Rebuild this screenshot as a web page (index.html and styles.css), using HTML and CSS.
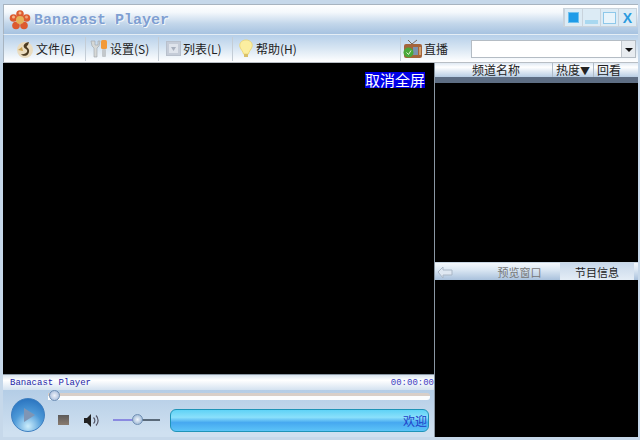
FILE: index.html
```html
<!DOCTYPE html>
<html lang="zh">
<head>
<meta charset="utf-8">
<title>Banacast Player</title>
<link rel="stylesheet" href="styles.css">
</head>
<body>
<div class="window">
  <header class="titlebar">
    <svg class="logo" width="22" height="22" viewBox="0 0 22 22">
      <g fill="#dd5a2e">
        <circle cx="11" cy="5" r="3.800"/><circle cx="4.500" cy="9" r="3.800"/><circle cx="17.500" cy="9" r="3.800"/><circle cx="7" cy="16.500" r="3.800"/><circle cx="15" cy="16.500" r="3.800"/>
      </g>
      <circle cx="11" cy="11" r="4" fill="#e4b25a"/>
      <circle cx="4.500" cy="8" r="1.500" fill="#f6b48a"/><circle cx="11" cy="4" r="1.500" fill="#f6b48a"/><circle cx="17.500" cy="8" r="1.500" fill="#eea27a"/>
    </svg>
    <span class="apptitle">Banacast Player</span>
    <div class="winbtns">
      <span class="wb wb-skin"><i></i></span>
      <span class="wb wb-min"><i></i></span>
      <span class="wb wb-max"><i></i></span>
      <span class="wb wb-close">X</span>
    </div>
  </header>
  <nav class="toolbar">
    <div class="tool tool-file">
      <svg width="20" height="20" viewBox="0 0 20 20"><circle cx="10" cy="11" r="8" fill="#eadcc0"/><path d="M14 3 C8 4 7 8 11 10 C14 12 11 16 6 15 C9 19 15 16 14 11 C13 8 10 8 13 6 Z" fill="#4d3c22"/><path d="M3 11 l4 -3 1 4 z" fill="#c9a24f"/></svg>
      <span>文件(E)</span>
    </div>
    <div class="tool tool-set">
      <svg width="22" height="22" viewBox="0 0 22 22"><path d="M3 3 l1 5 2 2 v9 h3 v-9 l2 -2 1 -5 -2 0 v4 h-3 v-4 z" fill="#d6d8d6" stroke="#9aa3a8" stroke-width=".6"/><rect x="13" y="2" width="6" height="9" rx="1.500" fill="#f29a3a"/><rect x="14" y="11" width="4" height="8" rx="1" fill="#c3c8cc"/></svg>
      <span>设置(S)</span>
    </div>
    <div class="tool tool-list">
      <svg width="15" height="15" viewBox="0 0 15 15"><rect x=".5" y=".5" width="14" height="14" fill="#c5ccd8" stroke="#b8c0cc"/><rect x="3" y="3" width="9" height="9" fill="#dfe4ec"/><path d="M5 6 h5 l-2.500 4 z" fill="#a8b0be"/></svg>
      <span>列表(L)</span>
    </div>
    <div class="tool tool-help">
      <svg width="16" height="20" viewBox="0 0 16 20"><path d="M8 1 C3 1 1 5 2 8 C3 11 5 12 5.500 15 L10.500 15 C11 12 13 11 14 8 C15 5 13 1 8 1Z" fill="#fbeea0" stroke="#ecd36a" stroke-width=".8"/><rect x="6" y="15" width="4" height="3" fill="#d9c06a"/></svg>
      <span>帮助(H)</span>
    </div>
    <div class="tool tool-live">
      <svg width="20" height="20" viewBox="0 0 20 20"><path d="M5 1 l4 4 5 -4" fill="none" stroke="#7a6a5a"/><rect x="1" y="5" width="18" height="14" rx="2" fill="#a4643a"/><rect x="10" y="8" width="5" height="8" fill="#7a93ae"/><rect x="16" y="8" width="2" height="8" fill="#d0a070"/><circle cx="5.500" cy="13.500" r="5" fill="#4aa83a"/><path d="M3.500 13.500 l2 2 2.500 -4" fill="none" stroke="#dff5d0"/></svg>
      <span>直播</span>
    </div>
    <div class="combo"><span class="combo-arrow"></span></div>
  </nav>
  <main class="content">
    <section class="left">
      <div class="video"><span class="fullscreen">取消全屏</span></div>
      <div class="player">
        <div class="infobar"><span>Banacast Player</span><span class="time">00:00:00</span></div>
        <div class="controls">
          <span class="play"><i></i></span>
          <div class="ctrlcol">
            <div class="seek"><span class="seekknob"></span></div>
            <div class="ctrlrow">
              <span class="stop"></span>
              <svg class="speaker" width="19" height="15" viewBox="0 0 19 15"><path d="M1 5 h3 l4 -4 v13 l-4 -4 h-3 z" fill="#222"/><path d="M10.500 4.500 a4 4 0 0 1 0 6 M13 2.500 a7 7 0 0 1 0 10" fill="none" stroke="#556" stroke-width="1.200"/></svg>
              <div class="volume"><span class="volknob"></span></div>
              <div class="marquee">欢迎</div>
            </div>
          </div>
        </div>
      </div>
    </section>
    <section class="right">
      <div class="listhead">
        <div class="cols"><span class="c-name">频道名称</span><span class="c-hot">热度<small class="sort">▼</small></span><span class="c-back">回看</span></div>
        <div class="headline"></div>
      </div>
      <div class="list"></div>
      <div class="tabs">
        <svg class="back" width="16" height="12" viewBox="0 0 16 12"><path d="M1 6 l5 -5 v3 h9 v5 h-9 v3 z" fill="#dfe8f2" stroke="#aab7c6"/></svg>
        <span class="tab tab-off">预览窗口</span>
        <span class="tab tab-on">节目信息</span>
      </div>
      <div class="preview"></div>
    </section>
  </main>
</div>
</body>
</html>
```
FILE: styles.css
```css
* { box-sizing: border-box; }
html, body { margin: 0; width: 640px; height: 440px; overflow: hidden; background: #c6d8ea; }
.window {
  width: 640px; height: 440px; display: flex; flex-direction: column;
  padding: 4px 2px 3px 3px; font: 12px "Noto Sans CJK SC", "Liberation Sans", sans-serif; color: #222;
}
.titlebar {
  height: 31px; flex: none; display: flex; align-items: center; padding-left: 5px;
  border-top: 1px solid #a8b4c0; border-bottom: 1px solid #e4edf5; border-left: 1px solid #a8b4c0;
  background: linear-gradient(#fff 0, #f4f8fc 25%, #c2d6ea 65%, #a6c2e0 100%);
}
.logo { margin-right: 3px; }
.apptitle {
  font: bold 15px "Liberation Mono", monospace; color: #7f9fd2; margin-top: 1px;
  text-shadow: 1px 1px 0 #f2f6fa, -1px 0 0 #e4edf5;
}
.winbtns { margin-left: auto; margin-right: 1px; margin-top: -4px; display: flex; gap: 1px; padding: 1px 1px 1px 2px; background: #c9d3dc; }
.wb { width: 17px; height: 17px; background: #dcebf5; display: flex; align-items: center; justify-content: center; }
.wb-skin i { width: 11px; height: 11px; background: #1e9be8; border: 1px solid #6fc0ee; display: block; }
.wb-min i { width: 13px; height: 4px; background: #a8d8f0; margin-top: 9px; display: block; }
.wb-max i { width: 13px; height: 12px; border: 1px solid #8ec8ea; background: #e8f4fb; display: block; }
.wb-close { color: #2a9be0; font: bold 14px "Liberation Sans", sans-serif; }
.toolbar {
  height: 28px; flex: none; display: flex; align-items: center;
  background: linear-gradient(#b6cfe9 0, #d8e6f3 50%, #fff 100%);
  border-bottom: 1px solid #b8bec4; border-left: 1px solid #a8b4c0;
}
.tool { display: flex; align-items: center; gap: 1px; white-space: nowrap; height: 24px; color: #222; }
.tool-file { width: 81px; padding-left: 11px; }
.tool-set { width: 73px; padding-left: 2px; border-left: 1px solid #c4cdd6; gap: 0; }
.tool-list { width: 74px; padding-left: 7px; border-left: 1px solid #c4cdd6; gap: 2px; }
.tool-help { width: 168px; padding-left: 5px; border-left: 1px solid #c4cdd6; gap: 2px; }
.tool-live { width: 71px; padding-left: 2px; border-left: 1px solid #c4cdd6; }
.combo {
  width: 165px; height: 18px; background: #fff; border: 1px solid #b4bcc4;
  display: flex; justify-content: flex-end;
}
.combo-arrow {
  width: 14px; border-left: 1px solid #c0c6cc; background: #e8ecf0; position: relative;
}
.combo-arrow::after {
  content: ""; position: absolute; left: 3px; top: 7px;
  border: 4px solid transparent; border-top: 4px solid #111; border-bottom: 0;
}
.content { flex: 1; display: flex; min-height: 0; }
.left { width: 432px; flex: none; display: flex; flex-direction: column; border-right: 1px solid #8a97a3; }
.video { height: 311px; flex: none; background: #000; display: flex; justify-content: flex-end; align-items: flex-start; padding: 9px 9px 0 0; }
.fullscreen { background: #0000e6; color: #fff; font-size: 15px; line-height: 16px; }
.player { flex: 1; display: flex; flex-direction: column; border-top: 1px solid #8a97a3; background: #bcd3e9; }
.infobar {
  height: 15px; flex: none; display: flex; justify-content: space-between; align-items: center; padding: 0 0 0 7px;
  font: 9px "Liberation Mono", monospace; color: #1e1ea8;
  background: linear-gradient(#d8e4ef, #fff 35%, #d4e2f0 100%);
}
.time { color: #3a3ac0; }
.controls { flex: 1; display: flex; padding-left: 8px; background: linear-gradient(#b4cde6, #cfe0f0 90%); }
.play {
  width: 34px; height: 34px; margin-top: 8px; border-radius: 50%; flex: none;
  background: radial-gradient(circle at 50% 85%, #cdeefc 0, #4e9ad8 45%, #1f68b8 100%);
  border: 1px solid #3e7fc0; display: flex; align-items: center; justify-content: center;
}
.play i { border-left: 11px solid #7f95b4; border-top: 7px solid transparent; border-bottom: 7px solid transparent; margin-left: 2px; }
.ctrlcol { flex: 1; display: flex; flex-direction: column; min-width: 0; }
.seek {
  height: 7px; margin: 3px 4px 0 3px; background: linear-gradient(#d8cfc8 0, #d8cfc8 50%, #fbfdfe 50%); position: relative; border-radius: 0 3px 3px 0;
}
.seekknob {
  position: absolute; left: 1px; top: -3px; width: 11px; height: 11px; border-radius: 50%;
  background: radial-gradient(circle, #eef2fa, #9db3d6); border: 1px solid #6f8fb5;
}
.ctrlrow { flex: 1; display: flex; align-items: center; padding-top: 3px; }
.stop { width: 11px; height: 10px; margin-left: 13px; background: linear-gradient(#5c5a5a, #8a7c70); flex: none; }
.speaker { margin-left: 14px; flex: none; }
.volume {
  width: 47px; height: 2px; margin-left: 11px; background: linear-gradient(90deg, #8a8ae0 50%, #5a6a7a 50%); position: relative; flex: none;
}
.volknob {
  position: absolute; left: 19px; top: -5px; width: 11px; height: 11px; border-radius: 50%;
  background: radial-gradient(circle, #f0f6fb, #8aa8cc); border: 1px solid #7090b4;
}
.marquee {
  width: 259px; height: 23px; margin-left: 10px; flex: none; border: 1px solid #1f94b8; border-radius: 6px;
  background: linear-gradient(#5fd2f6 0, #8ae0fb 35%, #46a8f0 60%, #5cc4f8 100%);
  color: #1e3ec8; font-size: 12px; text-align: right; line-height: 21px; padding-right: 1px;
}
.right { flex: 1; background: #000; display: flex; flex-direction: column; min-width: 0; }
.listhead { flex: none; }
.cols {
  height: 14px; display: flex; background: linear-gradient(#dfe9f3, #fff 30%, #b7cde4 100%);
  color: #222; line-height: 13px; padding-left: 37px;
}
.c-name { width: 80px; }
.c-hot { width: 41px; border-left: 1px solid #b0bcc8; padding-left: 3px; white-space: nowrap; }
.sort { font-size: 10px; }
.c-back { width: 36px; border-left: 1px solid #b0bcc8; padding-left: 3px; }
.headline { height: 6px; background: #5e6e84; }
.list { flex: 1; }
.tabs {
  height: 18px; flex: none; display: flex; align-items: center; padding-left: 2px; font-size: 11px;
  background: linear-gradient(#f4f8fc, #dbe7f3 40%, #a9c1dc 100%); border-top: 1px solid #c8d6e4;
}
.back { flex: none; }
.tab { height: 100%; display: flex; align-items: center; justify-content: center; }
.tab-off { width: 107px; padding-left: 26px; color: #777; }
.tab-on { width: 74px; color: #222; background: linear-gradient(#c8d8ea, #e4edf6); }
.preview { height: 157px; flex: none; }
```
